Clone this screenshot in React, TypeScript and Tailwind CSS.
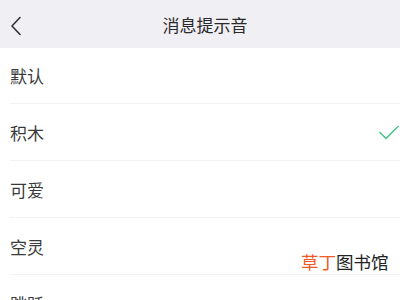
const items = ["默认", "积木", "可爱", "空灵", "跳跃"];
const selected = "积木";

function BackIcon() {
  return (
    <svg width="12" height="20" viewBox="0 0 12 20" fill="none">
      <path d="M10 1.5 L2 10 L10 18.5" stroke="#333" strokeWidth="1.6" strokeLinecap="round" strokeLinejoin="round" />
    </svg>
  );
}

function CheckIcon() {
  return (
    <svg width="20" height="15" viewBox="0 0 20 15" fill="none">
      <path d="M1 7.5 L7 13.5 L19 1.5" stroke="#4cc38e" strokeWidth="1.6" strokeLinecap="round" strokeLinejoin="round" />
    </svg>
  );
}

export default function App() {
  return (
    <div
      className="relative w-[400px] h-[300px] overflow-hidden bg-white"
      style={{ fontFamily: '"Noto Sans CJK SC", "Noto Sans", sans-serif' }}
    >
      <header className="relative flex h-[48px] items-center justify-center bg-[#f0eff4] pl-[10px]">
        <button className="absolute left-[10px] top-[16px]">
          <BackIcon />
        </button>
        <h1 className="text-[17px] leading-none text-[#2a2a2a]">消息提示音</h1>
      </header>
      <ul>
        {items.map((name) => (
          <li key={name} className="flex h-[57px] items-center pl-[10px] first:h-[56px]">
            <div className="flex h-full flex-1 items-center justify-between border-b border-[#f3f3f3] pr-[1px]">
              <span className="text-[17px] leading-none text-[#3a3a3a]">{name}</span>
              {name === selected && <CheckIcon />}
            </div>
          </li>
        ))}
      </ul>
      <div className="absolute left-[301px] top-[253px] text-[17.5px] leading-none">
        <span className="text-[#f05a24]">草丁</span>
        <span className="text-[#222]">图书馆</span>
      </div>
    </div>
  );
}
